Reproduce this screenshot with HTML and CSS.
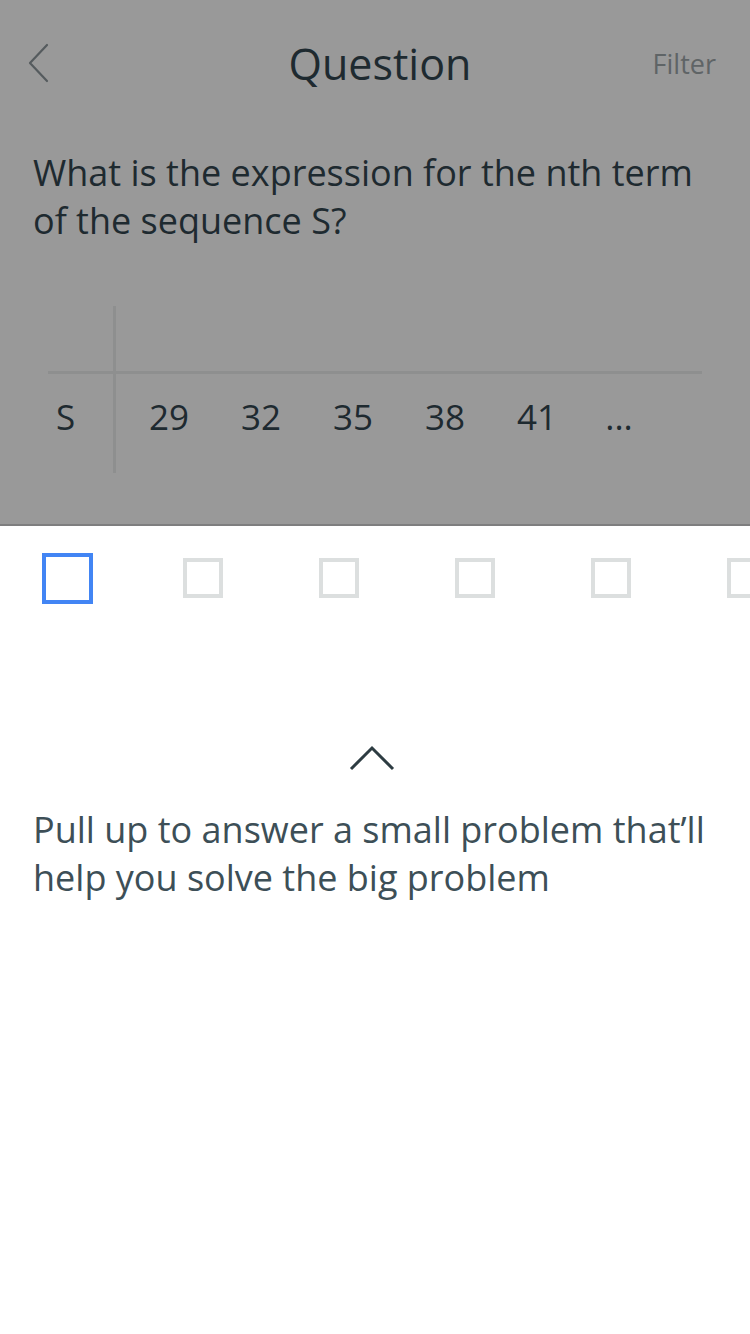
FILE: index.html
```html
<!DOCTYPE html>
<html lang="en">
<head>
<meta charset="utf-8">
<title>Question</title>
<link rel="stylesheet" href="styles.css">
</head>
<body>
<div class="screen">
  <section class="top">
    <header class="nav">
      <span class="back">
        <svg width="22" height="40" viewBox="0 0 22 40"><path d="M19 2 L2 20 L19 38" fill="none" stroke="#555b5e" stroke-width="2.2" stroke-linecap="round" stroke-linejoin="round"/></svg>
      </span>
      <h1 class="title">Question</h1>
      <span class="filter">Filter</span>
    </header>
    <p class="question">What is the expression for the nth term of the sequence S?</p>
    <div class="seq">
      <div class="cell head-label"></div>
      <div class="cell head-values"></div>
      <div class="cell label">S</div>
      <div class="cell values">
        <span class="v">29</span>
        <span class="v">32</span>
        <span class="v">35</span>
        <span class="v">38</span>
        <span class="v">41</span>
        <span class="v dots">...</span>
      </div>
    </div>
  </section>
  <section class="sheet">
    <div class="steps">
      <span class="slot"><span class="box active"></span></span>
      <span class="slot"><span class="box"></span></span>
      <span class="slot"><span class="box"></span></span>
      <span class="slot"><span class="box"></span></span>
      <span class="slot"><span class="box"></span></span>
      <span class="slot"><span class="box"></span></span>
    </div>
    <div class="pull">
      <svg width="46" height="28" viewBox="0 0 46 28"><path d="M2 25 L23 4 L44 25" fill="none" stroke="#2d3c42" stroke-width="3"/></svg>
    </div>
    <p class="hint">Pull up to answer a small problem that’ll help you solve the big problem</p>
  </section>
</div>
</body>
</html>
```

FILE: styles.css
```css
* { box-sizing: border-box; }
html, body { margin: 0; padding: 0; }
body {
  width: 750px;
  height: 1334px;
  background: #ffffff;
  font-family: "Open Sans", Lato, sans-serif;
  overflow: hidden;
}
.screen { width: 750px; height: 1334px; display: flex; flex-direction: column; }
.top {
  height: 526px;
  background: #999999;
  border-bottom: 2px solid #7e7e7f;
  display: flex;
  flex-direction: column;
}
.nav {
  height: 126px;
  display: flex;
  align-items: center;
  justify-content: space-between;
  padding: 0 34px 0 28px;
}
.back { width: 60px; display: flex; align-items: center; }
.back svg { display: block; }
.title {
  margin: 0;
  font-weight: 400;
  font-size: 43px;
  color: #1e2a30;
  flex: 1;
  text-align: center;
  padding-left: 24px;
}
.filter { width: 68px; text-align: right; font-size: 27px; color: #5f6466; }
.question {
  margin: 23px 0 0;
  padding: 0 33px;
  font-size: 36px;
  line-height: 48px;
  color: #1e2a30;
}
.seq {
  margin: 61px 0 0 48px;
  width: 654px;
  display: grid;
  grid-template-columns: 65px 1fr;
  grid-template-rows: 65px 102px;
  color: #1e2a30;
  font-size: 35px;
}
.head-values { border-left: 3px solid #8e8f8f; }
.label {
  border-top: 3px solid #8e8f8f;
  display: flex;
  align-items: center;
  padding-left: 8px;
  padding-bottom: 14px;
}
.values {
  border-top: 3px solid #8e8f8f;
  border-left: 3px solid #8e8f8f;
  display: flex;
  align-items: center;
  padding-left: 7px;
  padding-bottom: 14px;
}
.v { width: 92px; text-align: center; }
.v.dots { width: 72px; }
.sheet { flex: 1; background: #ffffff; }
.steps {
  display: flex;
  align-items: center;
  height: 104px;
  margin-left: -1px;
  overflow: hidden;
  white-space: nowrap;
}
.slot { flex: 0 0 136px; display: flex; justify-content: center; align-items: center; }
.box {
  display: block;
  width: 40px;
  height: 40px;
  border: 4px solid #dcdfdf;
}
.box.active { width: 51px; height: 51px; border-color: #4285f4; }
.pull { display: flex; justify-content: center; margin-top: 114px; padding-right: 6px; }
.pull svg { display: block; }
.hint {
  margin: 34px 0 0;
  padding: 0 33px;
  font-size: 36px;
  line-height: 48px;
  color: #3d4f57;
}
```
